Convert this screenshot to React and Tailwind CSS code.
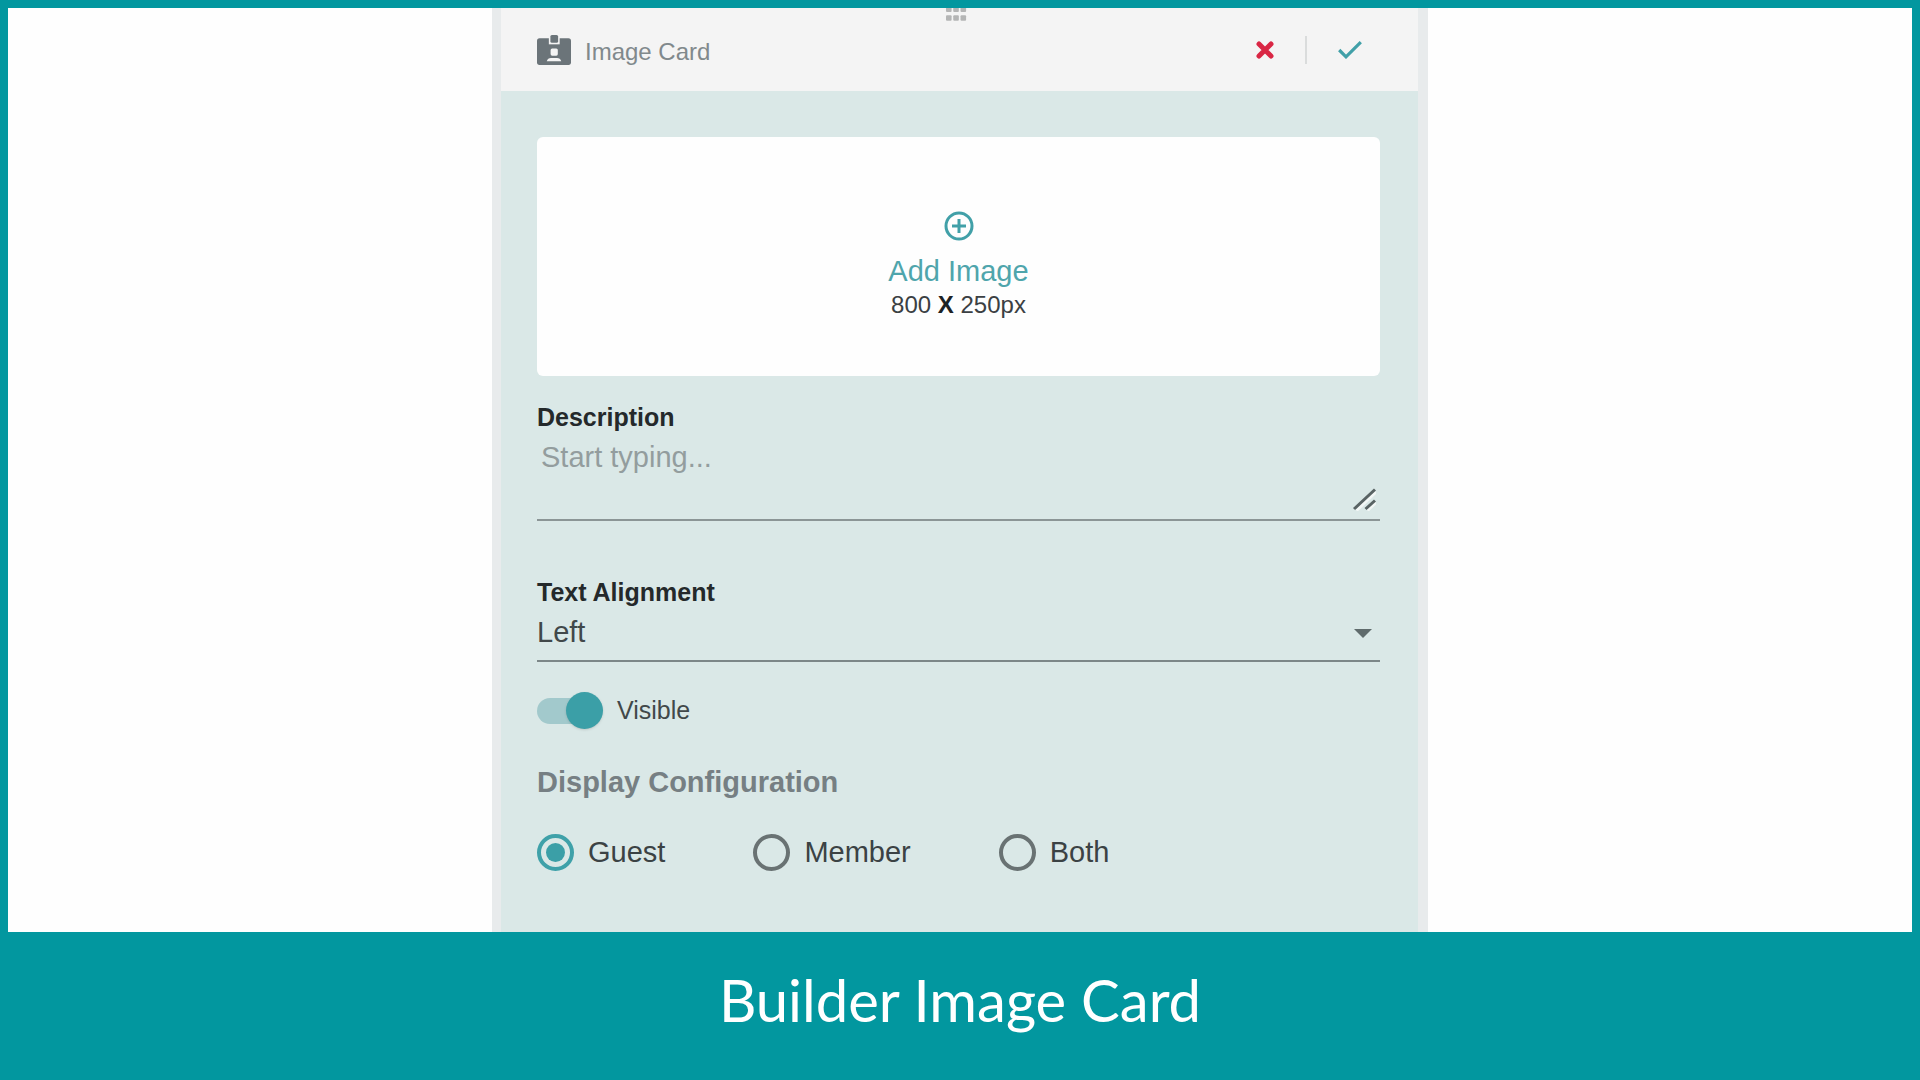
import React, { useState } from 'react';

const DISPLAY_OPTIONS = ['Guest', 'Member', 'Both'];

const BadgeIcon = () => (
    <svg width="34" height="30" viewBox="0 0 33 29" aria-hidden="true">
        <rect x="0" y="3" width="33" height="26" rx="2.5" fill="#6b7479" />
        <path d="M11.5 2h10.5v7h-10.5z" fill="#f4f4f4" />
        <rect x="13" y="0" width="7.5" height="7.5" rx="1.5" fill="#6b7479" />
        <rect x="13.2" y="13" width="7" height="7" rx="1.5" fill="#f4f4f4" />
        <path d="M9.500 25.500q1-3.200 4-3.200h6q3 0 4 3.200z" fill="#f4f4f4" />
    </svg>
);

const DragHandle = () => (
    <svg width="27" height="13" viewBox="0 0 27 13" fill="#b4b5b5" aria-hidden="true">
        {[0, 7.25, 14.5].map((x) => (
            <g key={x}>
                <rect x={x} y="-2" width="5.600" height="6" rx="1" />
                <rect x={x} y="7.200" width="5.600" height="5.600" rx="1" />
            </g>
        ))}
    </svg>
);

const CloseIcon = () => (
    <svg width="18" height="18" viewBox="0 0 18 18" fill="none" stroke="#d92644" strokeWidth="5" strokeLinecap="round" aria-hidden="true">
        <path d="M3 3l12 12M15 3L3 15" />
    </svg>
);

const CheckIcon = () => (
    <svg width="24" height="18" viewBox="0 0 24 18" fill="none" stroke="#41a0a8" strokeWidth="3.2" aria-hidden="true">
        <path d="M1.200 9L8 15.800L22.800 1.200" />
    </svg>
);

const AddIcon = () => (
    <svg width="30" height="30" viewBox="0 0 30 30" fill="none" stroke="#41a0a8" strokeWidth="3" aria-hidden="true">
        <circle cx="15" cy="15" r="13" />
        <path d="M15 8v14M8 15h14" />
    </svg>
);

const CardHeader = () => (
    <header className="relative flex h-[83px] items-center justify-between bg-[#f4f4f4] pl-9 pr-14">
        <div className="absolute inset-x-0 top-0 flex justify-center">
            <DragHandle />
        </div>
        <div className="flex items-center gap-3.5">
            <BadgeIcon />
            <h2 className="pt-1 text-[24px] leading-[32px] text-[#81898c]">Image Card</h2>
        </div>
        <div className="flex items-center gap-[31px]">
            <button type="button" aria-label="Cancel">
                <CloseIcon />
            </button>
            <span className="h-7 w-0.5 bg-[#dadcdc]" />
            <button type="button" aria-label="Save">
                <CheckIcon />
            </button>
        </div>
    </header>
);

const App = () => {
    const [description, setDescription] = useState('');
    const [alignment, setAlignment] = useState('Left');
    const [visible, setVisible] = useState(true);
    const [display, setDisplay] = useState('Guest');

    return (
        <div className="flex min-h-screen flex-col bg-[#02979f] font-['Liberation_Sans',Arial,sans-serif]">
            <main className="mx-2 mt-2 flex flex-1 justify-center bg-[#fefefe]">
                <section className="w-full max-w-[936px] border-r-10 border-l-9 border-[#e8ebec] bg-[#dae8e7]">
                    <CardHeader />

                    <form className="flex flex-col pt-[46px] pr-[38px] pb-12 pl-9">
                        <button
                            type="button"
                            className="flex h-[239px] flex-col items-center justify-center rounded-md bg-[#fefefe] pt-[18px]"
                        >
                            <AddIcon />
                            <span className="mt-3 text-[29px] leading-[36px] text-[#4fa5ac]">Add Image</span>
                            <span className="text-[24px] leading-[32px] text-[#3b4043]">
                                800 <b className="text-[#1d2224]">X</b> 250px
                            </span>
                        </button>

                        <label htmlFor="description" className="mt-[25px] text-[25px] leading-[32px] font-bold text-[#24292b]">
                            Description
                        </label>
                        <div className="relative">
                            <textarea
                                id="description"
                                placeholder="Start typing..."
                                value={description}
                                onChange={(e) => setDescription(e.target.value)}
                                className="block h-[88px] w-full resize-none border-b-2 border-[#8b9596] px-1 pt-1 text-[29px] leading-[40px] text-[#3f4648] outline-none placeholder:text-[#939d9e]"
                            />
                            <svg className="pointer-events-none absolute right-1 bottom-2.5" width="23" height="23" viewBox="0 0 23 23" fill="none" strokeWidth="3" aria-hidden="true">
                                <path d="M3.500 22.500L23 4M14.500 22.500L23 14.500" stroke="#f3f7f6" />
                                <path d="M1 21L22 1.500M12.500 21L22 12.500" stroke="#596364" />
                            </svg>
                        </div>

                        <label htmlFor="alignment" className="mt-[55px] text-[25px] leading-[32px] font-bold text-[#24292b]">
                            Text Alignment
                        </label>
                        <div className="relative">
                            <select
                                id="alignment"
                                value={alignment}
                                onChange={(e) => setAlignment(e.target.value)}
                                className="block h-[54px] w-full appearance-none border-b-2 border-[#7c8788] pb-0.5 text-[29px] text-[#41484a] outline-none"
                            >
                                <option>Left</option>
                                <option>Center</option>
                                <option>Right</option>
                            </select>
                            <svg className="pointer-events-none absolute right-2 bottom-6" width="18" height="9" viewBox="0 0 18 9" aria-hidden="true">
                                <path d="M0 0h18L9 9z" fill="#5f6b6c" />
                            </svg>
                        </div>

                        <label className="mt-[30px] flex items-center gap-3.5 self-start text-[25px] leading-[37px] text-[#41484a]">
                            <input
                                type="checkbox"
                                role="switch"
                                checked={visible}
                                onChange={(e) => setVisible(e.target.checked)}
                                className="relative h-[37px] w-[66px] appearance-none before:absolute before:top-1.5 before:left-0 before:h-[26px] before:w-[60px] before:rounded-full before:bg-[#b3bcbc] after:absolute after:top-0 after:left-0 after:size-[37px] after:rounded-full after:bg-[#f4f4f4] after:shadow-sm checked:before:bg-[#a2c9cc] checked:after:left-auto checked:after:right-0 checked:after:bg-[#3b9fa7]"
                            />
                            Visible
                        </label>

                        <fieldset className="mt-[33px]">
                            <legend className="text-[29px] leading-[40px] font-bold text-[#767f83]">
                                Display Configuration
                            </legend>
                            <div className="mt-8 flex flex-wrap gap-x-[88px] gap-y-4">
                                {DISPLAY_OPTIONS.map((option) => (
                                    <label key={option} className="flex items-center gap-3.5 text-[29px] leading-[37px] text-[#3b4244]">
                                        <input
                                            type="radio"
                                            name="display"
                                            value={option}
                                            checked={display === option}
                                            onChange={() => setDisplay(option)}
                                            className="grid size-[37px] appearance-none place-content-center rounded-full border-4 border-[#697273] before:size-[19px] before:rounded-full checked:border-[#3fa1a9] checked:before:bg-[#3b9fa7]"
                                        />
                                        {option}
                                    </label>
                                ))}
                            </div>
                        </fieldset>
                    </form>
                </section>
            </main>

            <footer className="flex h-[148px] items-center justify-center pb-3">
                <h1 className="font-[Lato,sans-serif] text-[58px] leading-[84px] text-white">Builder Image Card</h1>
            </footer>
        </div>
    );
};

export default App;
